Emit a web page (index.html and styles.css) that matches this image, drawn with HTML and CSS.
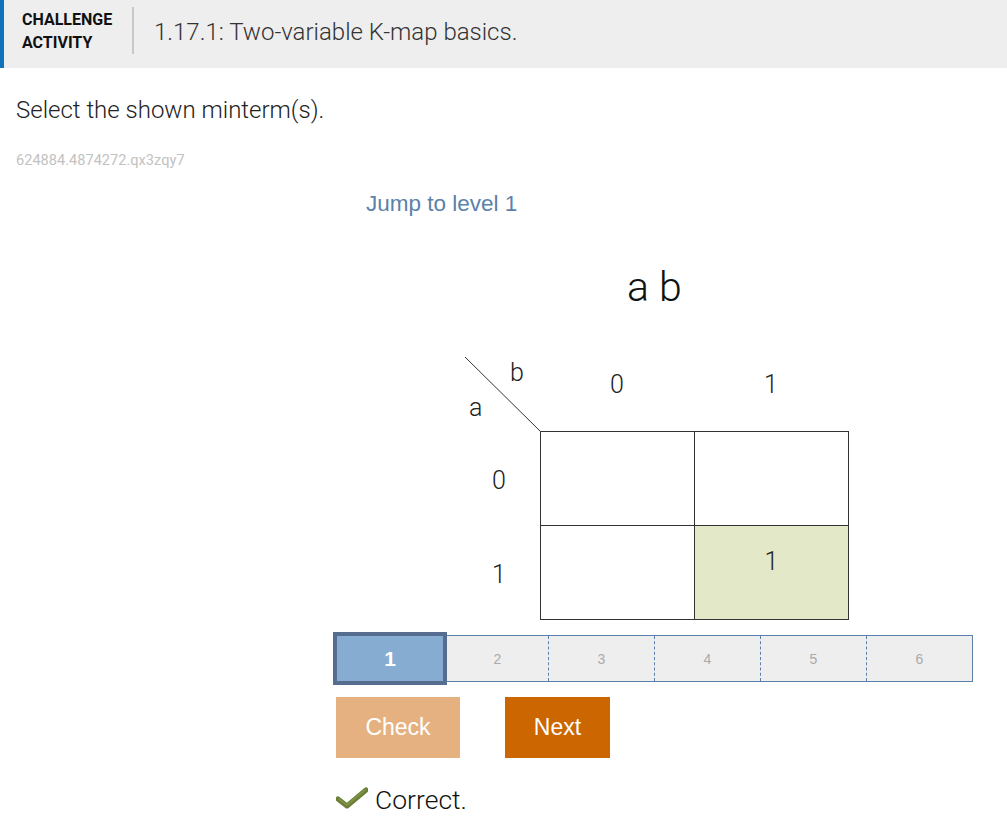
FILE: index.html
```html
<!DOCTYPE html>
<html>
<head>
<meta charset="utf-8">
<link rel="stylesheet" href="styles.css">
</head>
<body>
<header class="hdr">
  <div class="hdr-kind">CHALLENGE<br>ACTIVITY</div>
  <div class="hdr-sep"></div>
  <div class="hdr-title">1.17.1: Two-variable K-map basics.</div>
</header>
<main class="content">
  <p class="prompt">Select the shown minterm(s).</p>
  <p class="code">624884.4874272.qx3zqy7</p>
  <div class="stage">
    <div class="jump">Jump to level 1</div>
    <div class="expr">a b</div>
    <div class="kmap">
      <div class="corner">
        <svg class="diag" width="75" height="74" viewBox="0 0 75 74"><line x1="0" y1="0" x2="75" y2="74" stroke="#333" stroke-width="1"/></svg>
        <span class="lbl-b">b</span>
        <span class="lbl-a">a</span>
      </div>
      <div class="colhead"><span>0</span><span>1</span></div>
      <div class="rowhead"><span>0</span><span>1</span></div>
      <div class="cells">
        <div class="cell"></div>
        <div class="cell"></div>
        <div class="cell"></div>
        <div class="cell on">1</div>
      </div>
    </div>
    <div class="levels">
      <div class="lvl current">1</div>
      <div class="rest">
        <div class="lvl">2</div>
        <div class="lvl">3</div>
        <div class="lvl">4</div>
        <div class="lvl">5</div>
        <div class="lvl">6</div>
      </div>
    </div>
    <div class="buttons">
      <button class="btn check">Check</button>
      <button class="btn next">Next</button>
    </div>
    <div class="result">
      <svg class="tick" width="32" height="22" viewBox="0 0 32 22"><path d="M2 12 L11 19 L30 3" fill="none" stroke="#6b7d36" stroke-width="5" stroke-linecap="round" stroke-linejoin="round"/><path d="M3 12 L11 18 L29 3" fill="none" stroke="#7e9244" stroke-width="2" stroke-linecap="round"/></svg>
      <span>Correct.</span>
    </div>
  </div>
</main>
</body>
</html>
```
FILE: styles.css
```css
body {
  margin: 0;
  font-family: Roboto, "Liberation Sans", sans-serif;
  color: #222;
  background: #fff;
}
.hdr {
  display: flex;
  align-items: center;
  height: 68px;
  background: #eeeeee;
  border-left: 4px solid #0f72ba;
  box-sizing: border-box;
}
.hdr-kind {
  font-weight: 700;
  font-size: 16px;
  line-height: 23px;
  color: #111;
  margin-left: 18px;
  width: 110px;
  margin-top: -6px;
}
.hdr-sep {
  width: 2px;
  height: 47px;
  background: #c8c8c8;
  margin-top: -7px;
}
.hdr-title {
  font-weight: 300;
  font-size: 24px;
  color: #333;
  margin-left: 20px;
  margin-top: -5px;
}
.content {
  padding: 0 0 0 16px;
}
.prompt {
  margin: 0;
  padding-top: 27px;
  font-weight: 300;
  font-size: 24px;
  line-height: 30px;
  color: #222;
}
.code {
  margin: 0;
  padding-top: 26px;
  font-size: 14.6px;
  line-height: 18px;
  color: #c2c2c2;
}
.stage {
  margin-left: 317px;
}
.jump {
  margin-top: 22px;
  margin-left: 33px;
  font-family: "Liberation Sans", Arial, sans-serif;
  font-size: 22.5px;
  line-height: 26px;
  color: #5a82aa;
}
.expr {
  margin-top: 47px;
  padding-left: 294px;
  font-weight: 300;
  font-size: 41px;
  line-height: 46px;
  color: #111;
}
.kmap {
  display: grid;
  grid-template-columns: 75px 309px;
  grid-template-rows: 74px 189px;
  margin-top: 47px;
  margin-left: 132px;
  font-weight: 300;
  font-size: 25px;
  color: #222;
}
.corner {
  position: relative;
}
.diag {
  display: block;
}
.lbl-b {
  position: absolute;
  left: 45px;
  top: 1px;
}
.lbl-a {
  position: absolute;
  left: 4px;
  top: 36px;
}
.colhead {
  display: flex;
}
.colhead span {
  width: 154px;
  text-align: center;
  padding-top: 13px;
}
.rowhead {
  display: flex;
  flex-direction: column;
}
.rowhead span {
  height: 91px;
  line-height: 94px;
  padding-left: 27px;
  padding-top: 3px;
}
.cells {
  display: grid;
  grid-template-columns: 153px 153px;
  grid-template-rows: 93px 93px;
  gap: 1px;
  padding: 1px;
  background: #333;
}
.cell {
  background: #fff;
  display: flex;
  align-items: center;
  justify-content: center;
  padding-bottom: 22px;
  box-sizing: border-box;
}
.cell.on {
  background: #e3e8c9;
}
.levels {
  display: flex;
  align-items: center;
  width: 640px;
  margin-top: 12px;
  font-family: "Liberation Sans", Arial, sans-serif;
}
.lvl.current {
  width: 114px;
  height: 53px;
  box-sizing: border-box;
  border: 4px solid #566d8f;
  background: #87acd2;
  color: #fff;
  font-weight: 700;
  font-size: 21px;
  display: flex;
  align-items: center;
  justify-content: center;
}
.rest {
  flex: 1;
  display: flex;
  height: 47px;
  box-sizing: border-box;
  border: 1px solid #5b80aa;
  border-left: none;
  background: #eeeeee;
}
.rest .lvl {
  flex: 1;
  display: flex;
  align-items: center;
  justify-content: center;
  color: #aaaaaa;
  font-size: 14px;
  border-left: 1px dashed #5b80aa;
}
.rest .lvl:first-child {
  flex: 0 0 101px;
  border-left: none;
}
.buttons {
  display: flex;
  gap: 45px;
  margin-top: 12px;
  margin-left: 3px;
}
.btn {
  height: 61px;
  border: none;
  color: #fff;
  font-family: "Liberation Sans", Arial, sans-serif;
  font-size: 23px;
  padding: 0;
}
.check {
  width: 124px;
  background: #e5b181;
}
.next {
  width: 105px;
  background: #cc6600;
}
.result {
  display: flex;
  align-items: center;
  gap: 7px;
  margin-top: 26px;
  margin-left: 3px;
  font-weight: 300;
  font-size: 26.5px;
  color: #111;
}
.tick {
  display: block;
  margin-top: -3px;
}
```
